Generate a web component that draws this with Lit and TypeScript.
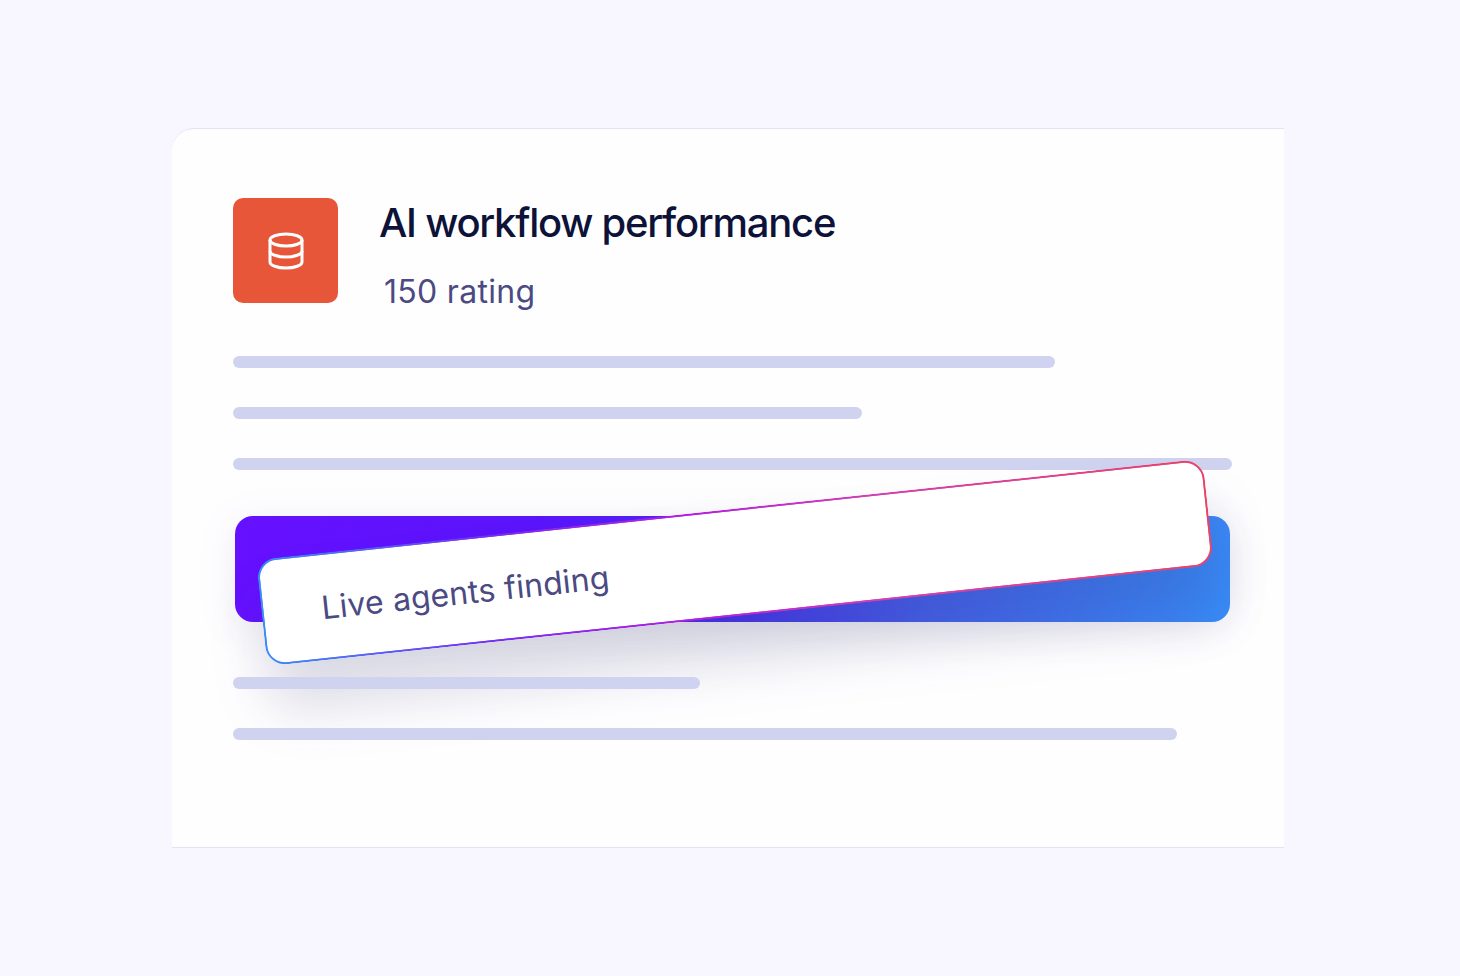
import { LitElement, css, html } from 'lit';
import { customElement } from 'lit/decorators.js';

const TOP_BARS = [822, 629, 999];
const BOTTOM_BARS = [467, 944];

@customElement('app-root')
export class AppRoot extends LitElement {
  static styles = css`
    :host {
      display: block;
      height: 976px;
      box-sizing: border-box;
      padding: 128px 176px 0 172px;
      background: #f8f7ff;
      font-family: 'Inter', 'Noto Sans', sans-serif;
      overflow: hidden;
    }

    .card {
      box-sizing: border-box;
      height: 720px;
      padding: 69px 52px 0 61px;
      background: #fffeff;
      border-top: 1px solid #e3e1f8;
      border-bottom: 1px solid #e3e1f8;
      border-top-left-radius: 22px;
      overflow: hidden;
    }

    .header {
      display: flex;
      gap: 42px;
      margin-bottom: 53px;
    }

    .icon {
      flex: none;
      display: flex;
      align-items: center;
      justify-content: center;
      width: 105px;
      height: 105px;
      border-radius: 10px;
      background: #e75638;
    }

    .title {
      margin: 5px 0 0 -1px;
      font-size: 40px;
      line-height: 40px;
      font-weight: 500;
      letter-spacing: -1.26px;
      color: #0d1238;
    }

    .rating {
      margin: 39px 0 0 4px;
      font-size: 32px;
      line-height: 20px;
      color: #4b4a82;
      letter-spacing: 0.3px;
    }

    .bars {
      position: relative;
      z-index: 1;
      display: flex;
      flex-direction: column;
      gap: 39px;
    }

    .bar {
      height: 12px;
      border-radius: 6px;
      background: #d0d3f0;
    }

    .feature {
      position: relative;
      z-index: 2;
      height: 106px;
      margin: 46px 2px 55px;
      border-radius: 18px;
      background: linear-gradient(105deg, #6610ff 0%, #5a14fb 30%, #4730ee 50%, #4560ec 70%, #388cf8 100%);
      box-shadow: 0 6px 40px rgba(60, 60, 130, 0.1);
    }

    .feature + .bars {
      z-index: 3;
    }

    .tilted {
      position: absolute;
      left: 24px;
      top: -7px;
      box-sizing: border-box;
      display: flex;
      align-items: center;
      width: 952px;
      height: 107px;
      padding: 1px 0 0 58px;
      border: 2px solid transparent;
      border-radius: 20px;
      background:
        linear-gradient(#fff, #fff) padding-box,
        linear-gradient(90deg, #3c8cf6 0%, #7a2cf0 25%, #b020e0 45%, #d040b0 65%, #e9436a 100%) border-box;
      transform: rotate(-6.1deg);
      box-shadow: 0 44px 56px rgba(50, 55, 110, 0.18);
      font-size: 32px;
      color: #4b4a82;
      letter-spacing: 0.15px;
    }
  `;

  render() {
    return html`
      <div class="card">
        <div class="header">
          <div class="icon">
            <svg width="38" height="38" viewBox="0 0 38 38" fill="none" stroke="#fff" stroke-width="3">
              <ellipse cx="19" cy="8" rx="16" ry="6" />
              <path d="M3 8v22c0 3.300 7.200 6 16 6s16-2.700 16-6v-22" />
              <path d="M3 19c0 3.300 7.200 6 16 6s16-2.700 16-6" />
            </svg>
          </div>
          <div>
            <h1 class="title">AI workflow performance</h1>
            <p class="rating">150 rating</p>
          </div>
        </div>
        <div class="bars">
          ${TOP_BARS.map((w) => html`<div class="bar" style="width:${w}px"></div>`)}
        </div>
        <div class="feature">
          <div class="tilted">Live agents finding</div>
        </div>
        <div class="bars">
          ${BOTTOM_BARS.map((w) => html`<div class="bar" style="width:${w}px"></div>`)}
        </div>
      </div>
    `;
  }
}
